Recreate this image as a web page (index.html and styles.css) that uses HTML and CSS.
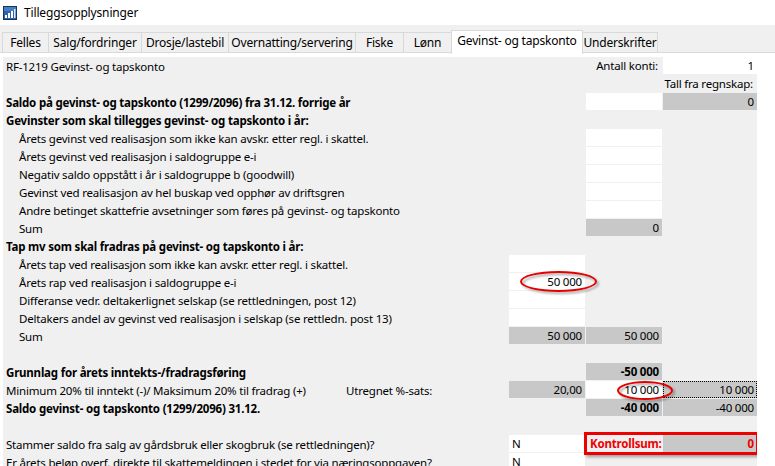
FILE: index.html
```html
<!DOCTYPE html>
<html>
<head>
<meta charset="utf-8">
<link rel="stylesheet" href="styles.css">
</head>
<body>
<div class="titlebar">
  <svg class="appicon" width="14" height="14" viewBox="0 0 14 14">
    <rect x="0.5" y="0.5" width="13" height="13" fill="#2f64a8" stroke="#16345f"/>
    <rect x="1" y="1" width="12" height="4" fill="#5b8fd0" opacity="0.6"/>
    <rect x="2" y="9" width="2" height="3" fill="#ffffff"/>
    <rect x="5" y="7" width="2" height="5" fill="#ffffff"/>
    <rect x="8" y="5" width="2" height="7" fill="#ffffff"/>
    <rect x="11" y="3" width="1.5" height="9" fill="#dfe9f7"/>
  </svg>
  <span class="title">Tilleggsopplysninger</span>
</div>
<div class="window">
  <div class="tabs">
    <div class="tab t1">Felles</div>
    <div class="tab t2">Salg/fordringer</div>
    <div class="tab t3">Drosje/lastebil</div>
    <div class="tab t4">Overnatting/servering</div>
    <div class="tab t5">Fiske</div>
    <div class="tab t6">Lønn</div>
    <div class="tab t7 active">Gevinst- og tapskonto</div>
    <div class="tab t8">Underskrifter</div>
  </div>
  <div class="page">
    <div class="panel">
      <div class="row">
        <div class="lbl">RF-1219 Gevinst- og tapskonto</div><div></div>
        <div class="cap right">Antall konti:</div><div class="cell white num">1</div>
      </div>
      <div class="row">
        <div class="lbl"></div><div></div><div></div><div class="cap right">Tall fra regnskap:</div>
      </div>
      <div class="row">
        <div class="lbl bold">Saldo på gevinst- og tapskonto (1299/2096) fra 31.12. forrige år</div><div></div>
        <div class="cell white"></div><div class="cell gray num">0</div>
      </div>
      <div class="row">
        <div class="lbl bold">Gevinster som skal tillegges gevinst- og tapskonto i år:</div>
      </div>
      <div class="row">
        <div class="lbl ind">Årets gevinst ved realisasjon som ikke kan avskr. etter regl. i skattel.</div><div></div>
        <div class="cell white"></div>
      </div>
      <div class="row">
        <div class="lbl ind">Årets gevinst ved realisasjon i saldogruppe e-i</div><div></div>
        <div class="cell white"></div>
      </div>
      <div class="row">
        <div class="lbl ind">Negativ saldo oppstått i år i saldogruppe b (goodwill)</div><div></div>
        <div class="cell white"></div>
      </div>
      <div class="row">
        <div class="lbl ind">Gevinst ved realisasjon av hel buskap ved opphør av driftsgren</div><div></div>
        <div class="cell white"></div>
      </div>
      <div class="row">
        <div class="lbl ind">Andre betinget skattefrie avsetninger som føres på gevinst- og tapskonto</div><div></div>
        <div class="cell white"></div>
      </div>
      <div class="row">
        <div class="lbl ind">Sum</div><div></div>
        <div class="cell gray num">0</div>
      </div>
      <div class="row">
        <div class="lbl bold">Tap mv som skal fradras på gevinst- og tapskonto i år:</div>
      </div>
      <div class="row">
        <div class="lbl ind">Årets tap ved realisasjon som ikke kan avskr. etter regl. i skattel.</div>
        <div class="cell white"></div>
      </div>
      <div class="row">
        <div class="lbl ind">Årets rap ved realisasjon i saldogruppe e-i</div>
        <div class="cell white num">50 000</div>
      </div>
      <div class="row">
        <div class="lbl ind">Differanse vedr. deltakerlignet selskap (se rettledningen, post 12)</div>
        <div class="cell white"></div>
      </div>
      <div class="row">
        <div class="lbl ind">Deltakers andel av gevinst ved realisasjon i selskap (se rettledn. post 13)</div>
        <div class="cell white"></div>
      </div>
      <div class="row">
        <div class="lbl ind">Sum</div>
        <div class="cell gray num">50 000</div><div class="cell gray num">50 000</div>
      </div>
      <div class="row"><div class="lbl"></div></div>
      <div class="row">
        <div class="lbl bold">Grunnlag for årets inntekts-/fradragsføring</div><div></div>
        <div class="cell gray num bold">-50 000</div>
      </div>
      <div class="row">
        <div class="lbl split"><span>Minimum 20% til inntekt (-)/ Maksimum 20% til fradrag (+)</span><span class="sub">Utregnet %-sats:</span></div>
        <div class="cell gray num">20,00</div>
        <div class="cell white num">10 000</div>
        <div class="cell gray num focus">10 000</div>
      </div>
      <div class="row">
        <div class="lbl bold">Saldo gevinst- og tapskonto (1299/2096) 31.12.</div><div></div>
        <div class="cell gray num bold">-40 000</div><div class="cell gray num">-40 000</div>
      </div>
      <div class="row"><div class="lbl"></div></div>
      <div class="row">
        <div class="lbl">Stammer saldo fra salg av gårdsbruk eller skogbruk (se rettledningen)?</div>
        <div class="cell white">N</div>
        <div class="cap red bold">Kontrollsum:</div>
        <div class="cell gray num red bold">0</div>
      </div>
      <div class="row last">
        <div class="lbl">Er årets beløp overf. direkte til skattemeldingen i stedet for via næringsoppgaven?</div>
        <div class="cell white">N</div>
      </div>

      <div class="ellipse e1"></div>
      <div class="ellipse e2"></div>
      <div class="redframe"></div>
    </div>
  </div>
</div>
</body>
</html>
```

FILE: styles.css
```css
* { box-sizing: border-box; }
html, body {
  margin: 0;
  padding: 0;
  width: 775px;
  height: 466px;
  overflow: hidden;
  background: #ffffff;
  font-family: "Noto Sans", "Open Sans", sans-serif;
  font-size: 11.5px;
  letter-spacing: -0.2px;
  color: #000;
}
.titlebar {
  height: 25px;
  background: #ffffff;
  display: flex;
  align-items: center;
  padding-left: 3px;
}
.appicon { margin-top: 1px; }
.title {
  margin-left: 7px;
  font-size: 12px;
  letter-spacing: -0.15px;
  color: #000;
}
.window {
  background: #f0f0f0;
  height: 441px;
  display: flex;
  flex-direction: column;
}
.tabs {
  display: flex;
  padding-top: 7px;
  padding-left: 2px;
  height: 28px;
  border-bottom: 1px solid #d9d9d9;
  align-items: flex-start;
}
.tab {
  height: 20px;
  line-height: 19px;
  text-align: center;
  border: 1px solid #d9d9d9;
  border-right: none;
  border-bottom: none;
  background: #f0f0f0;
  white-space: nowrap;
  font-size: 12px;
  letter-spacing: -0.2px;
}
.t1 { width: 46px; }
.t2 { width: 93px; }
.t3 { width: 87px; }
.t4 { width: 127px; }
.t5 { width: 48px; }
.t6 { width: 48px; }
.t7 { width: 132px; }
.t8 { width: 75px; border-right: 1px solid #d9d9d9; }
.tab.active {
  background: #ffffff;
  height: 24px;
  margin-top: -2px;
  line-height: 20px;
  border-right: 1px solid #d9d9d9;
  position: relative;
  z-index: 2;
}
.tab.active + .tab { border-left: none; }
.page {
  flex: 1;
  background: #ffffff;
  padding: 4px 0 0 3px;
}
.panel {
  position: relative;
  width: 754px;
  height: 100%;
  background: #f0f0f0;
  display: flex;
  flex-direction: column;
  gap: 1px;
  overflow: hidden;
}
.row {
  display: grid;
  grid-template-columns: 505px 76px 76px 94px;
  column-gap: 1px;
  height: 17px;
  flex: none;
}
.lbl {
  height: 17px;
  overflow: hidden;
  white-space: nowrap;
  line-height: 17px;
  padding-top: 1px;
  padding-left: 3px;
}
.lbl.ind { padding-left: 16px; }
.lbl.split { display: flex; }
.lbl .sub { margin-left: auto; width: 162px; }
.bold { font-weight: bold; }
.cell {
  height: 17px;
  line-height: 17px;
  padding: 0 3px;
  overflow: hidden;
  white-space: nowrap;
}
.cell.white { background: #ffffff; }
.cell.gray { background: #c8c8c8; }
.num { text-align: right; }
.cap {
  height: 17px;
  line-height: 17px;
  white-space: nowrap;
  padding-left: 4px;
}
.cap.right { text-align: right; padding-right: 4px; padding-left: 0; }
.red { color: #ee0000; }
.focus { outline: 1px dotted #000; outline-offset: -1px; }
.ellipse {
  position: absolute;
  border: 2px solid #e60000;
  border-radius: 50%;
  filter: drop-shadow(2px 2px 1px rgba(0,0,0,0.35));
}
.e1 { left: 517px; top: 214px; width: 77px; height: 21px; }
.e2 { left: 614px; top: 324px; width: 56px; height: 19px; }
.redframe {
  position: absolute;
  left: 581px;
  top: 375px;
  width: 175px;
  height: 23px;
  border: 3px solid #ee0000;
  box-shadow: 2px 2px 3px rgba(0,0,0,0.35);
}
```
